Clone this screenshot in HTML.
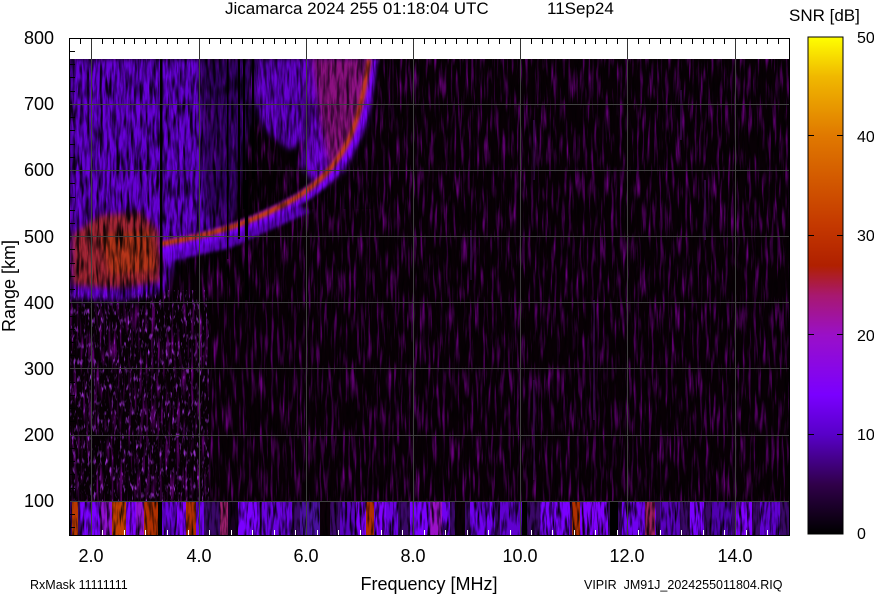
<!DOCTYPE html>
<html><head><meta charset="utf-8"><style>
html,body{margin:0;padding:0;background:#fff;}
svg{display:block;font-family:"Liberation Sans",Arial,sans-serif;}
</style></head><body>
<svg width="874" height="595" viewBox="0 0 874 595" xmlns="http://www.w3.org/2000/svg">
<defs>
<linearGradient id="cb" x1="0" y1="1" x2="0" y2="0">
<stop offset="0" stop-color="#000000"/>
<stop offset="0.1" stop-color="#30004a"/>
<stop offset="0.2" stop-color="#5800c8"/>
<stop offset="0.28" stop-color="#7a00ff"/>
<stop offset="0.4" stop-color="#9a10c8"/>
<stop offset="0.48" stop-color="#a81870"/>
<stop offset="0.54" stop-color="#b02000"/>
<stop offset="0.62" stop-color="#c43800"/>
<stop offset="0.8" stop-color="#e07800"/>
<stop offset="0.92" stop-color="#f0b800"/>
<stop offset="1" stop-color="#ffff00"/>
</linearGradient>
<filter id="nz" x="0" y="0" width="100%" height="100%">
<feTurbulence type="fractalNoise" baseFrequency="0.35 0.03" numOctaves="2" seed="3"/>
<feColorMatrix type="matrix" values="0 0 0 0 0.3  0 0 0 0 0  0 0 0 0 0.45  3 0 0 0 -1.5"/>
</filter>
<filter id="nz2" x="0" y="0" width="100%" height="100%">
<feTurbulence type="fractalNoise" baseFrequency="0.4 0.05" numOctaves="2" seed="7"/>
<feColorMatrix type="matrix" values="0 0 0 0 0  0 0 0 0 0  0 0 0 0 0  3 0 0 0 -1.3"/>
</filter>
<filter id="nz4" x="0" y="0" width="100%" height="100%">
<feTurbulence type="fractalNoise" baseFrequency="0.3 0.04" numOctaves="2" seed="19"/>
<feColorMatrix type="matrix" values="0 0 0 0 0  0 0 0 0 0  0 0 0 0 0  3.5 0 0 0 -1.6"/>
</filter>
<filter id="nz3" x="0" y="0" width="100%" height="100%">
<feTurbulence type="fractalNoise" baseFrequency="0.5 0.12" numOctaves="2" seed="11"/>
<feColorMatrix type="matrix" values="0 0 0 0 0.5  0 0 0 0 0.05  0 0 0 0 1  4 0 0 0 -2.3"/>
</filter>
<filter id="bl"><feGaussianBlur stdDeviation="3"/></filter>
<filter id="bl2"><feGaussianBlur stdDeviation="1.5"/></filter>
<clipPath id="dc"><rect x="69" y="59" width="720" height="476"/></clipPath>
</defs>

<g clip-path="url(#dc)">
<rect x="69" y="59" width="720" height="476" fill="#080005"/>
<rect x="69" y="59" width="720" height="476" filter="url(#nz)" opacity="0.7"/>
<rect x="69" y="290" width="140" height="212" filter="url(#nz3)" opacity="0.85"/>

<!-- left purple blob -->
<path d="M69 59 L200 59 L205 200 L215 240 L200 250 L175 262 L165 292 L120 300 L69 298 Z" fill="#7400f8" filter="url(#bl)" opacity="0.85"/>
<path d="M200 59 L255 59 L250 120 L232 230 L205 240 Z" fill="#5000a8" filter="url(#bl)" opacity="0.6"/>
<!-- left red blob -->
<path d="M72 235 L100 215 L140 212 L158 230 L162 250 L160 282 L120 288 L72 285 Z" fill="#b83000" filter="url(#bl)" opacity="0.75"/>
<path d="M100 235 L150 230 L158 270 L110 275 Z" fill="#c84400" filter="url(#bl)" opacity="0.5"/>
<rect x="69" y="59" width="190" height="245" filter="url(#nz4)" opacity="0.85"/>

<!-- upper F region purple -->
<path d="M255 59 L305 59 L305 140 L290 150 L265 130 L255 105 Z" fill="#7a00ff" filter="url(#bl)" opacity="0.8"/>
<path d="M300 59 L372 59 L368 120 L345 170 L320 190 L300 165 L310 120 Z" fill="#8000ff" filter="url(#bl)" opacity="0.85"/>
<path d="M312 59 L368 59 L362 110 L345 150 L330 170 L320 120 Z" fill="#b02818" filter="url(#bl)" opacity="0.45"/>
<rect x="250" y="59" width="125" height="150" filter="url(#nz4)" opacity="0.6"/>
<path d="M160 250 L230 236 L300 205 L310 212 L230 248 L165 262 Z" fill="#7000ee" filter="url(#bl2)" opacity="0.8"/>

<!-- F trace -->
<path d="M160 247 C200 240 240 230 275 212 C305 198 330 180 348 150 C360 128 366 100 372 59" fill="none" stroke="#7a00ff" stroke-width="12" filter="url(#bl2)"/>
<path d="M160 244 C200 237 240 227 275 209 C305 195 328 177 345 147 C357 125 363 98 369 59" fill="none" stroke="#c84000" stroke-width="5" filter="url(#bl2)"/>

<g fill="#000">
<rect x="160" y="59" width="2.5" height="240"/>
<rect x="227" y="59" width="1.5" height="200"/>
<rect x="238" y="59" width="2" height="180"/>
<rect x="245" y="180" width="3" height="120"/>
<rect x="252" y="59" width="2" height="120"/>
<rect x="243" y="59" width="2" height="150"/>
</g>
<g fill="#3a0a50" opacity="0.8">
<rect x="470" y="230" width="2" height="50"/>
<rect x="533" y="380" width="2" height="100"/>
<rect x="533" y="120" width="2" height="60"/>
<rect x="704" y="180" width="2" height="60"/>
<rect x="680" y="90" width="2" height="50"/>
<rect x="593" y="300" width="2" height="120"/>
</g>
<rect x="69" y="59" width="720" height="476" filter="url(#nz2)" opacity="0.5"/>

<!-- bottom band -->
<g>
<rect x="69" y="502" width="720" height="33" fill="#3a0868"/>
<rect x="72" y="502" width="6" height="33" fill="#b83800"/>
<rect x="80" y="502" width="20" height="33" fill="#7a00ff"/>
<rect x="100" y="502" width="12" height="33" fill="#9010d0"/>
<rect x="112" y="502" width="14" height="33" fill="#c04000"/>
<rect x="126" y="502" width="10" height="33" fill="#8000ff"/>
<rect x="136" y="502" width="8" height="33" fill="#9010d0"/>
<rect x="144" y="502" width="14" height="33" fill="#b03000"/>
<rect x="158" y="502" width="4" height="33" fill="#000"/>
<rect x="162" y="502" width="14" height="33" fill="#6a00e0"/>
<rect x="176" y="502" width="10" height="33" fill="#8000ff"/>
<rect x="186" y="502" width="10" height="33" fill="#b03000"/>
<rect x="196" y="502" width="8" height="33" fill="#7000f0"/>
<rect x="204" y="502" width="16" height="33" fill="#3a0868"/>
<rect x="220" y="502" width="8" height="33" fill="#a02070"/>
<rect x="228" y="502" width="10" height="33" fill="#180020"/>
<rect x="238" y="502" width="22" height="33" fill="#7a00ff"/>
<rect x="262" y="502" width="30" height="33" fill="#6a00e0"/>
<rect x="300" y="502" width="20" height="33" fill="#4a10a0"/>
<rect x="320" y="502" width="10" height="33" fill="#0c0008"/>
<rect x="340" y="502" width="15" height="33" fill="#5a00c0"/>
<rect x="356" y="502" width="30" height="33" fill="#8000ff"/>
<rect x="366" y="502" width="8" height="33" fill="#b03000"/>
<rect x="386" y="502" width="12" height="33" fill="#6a00e0"/>
<rect x="410" y="502" width="20" height="33" fill="#7a00ff"/>
<rect x="430" y="502" width="12" height="33" fill="#9a10c8"/>
<rect x="442" y="502" width="8" height="33" fill="#7000f0"/>
<rect x="455" y="502" width="10" height="33" fill="#0c0008"/>
<rect x="470" y="502" width="25" height="33" fill="#7000f0"/>
<rect x="500" y="502" width="22" height="33" fill="#6000d0"/>
<rect x="522" y="502" width="5" height="33" fill="#000"/>
<rect x="540" y="502" width="30" height="33" fill="#7a00ff"/>
<rect x="572" y="502" width="8" height="33" fill="#b03000"/>
<rect x="580" y="502" width="28" height="33" fill="#8000ff"/>
<rect x="610" y="502" width="8" height="33" fill="#000"/>
<rect x="622" y="502" width="34" height="33" fill="#7000f0"/>
<rect x="645" y="502" width="10" height="33" fill="#a02060"/>
<rect x="660" y="502" width="20" height="33" fill="#5a00c0"/>
<rect x="690" y="502" width="14" height="33" fill="#7a00ff"/>
<rect x="712" y="502" width="20" height="33" fill="#5000b0"/>
<rect x="736" y="502" width="16" height="33" fill="#8000ff"/>
<rect x="760" y="502" width="20" height="33" fill="#6000d0"/>
<rect x="69" y="502" width="720" height="33" filter="url(#nz2)" opacity="0.9"/>
</g>

<g stroke="#404040" stroke-width="1">
<line x1="91.5" y1="59" x2="91.5" y2="535"/>
<line x1="199.5" y1="59" x2="199.5" y2="535"/>
<line x1="306.5" y1="59" x2="306.5" y2="535"/>
<line x1="413.5" y1="59" x2="413.5" y2="535"/>
<line x1="520.5" y1="59" x2="520.5" y2="535"/>
<line x1="627.5" y1="59" x2="627.5" y2="535"/>
<line x1="735.5" y1="59" x2="735.5" y2="535"/>
<line x1="69" y1="104.5" x2="789" y2="104.5"/>
<line x1="69" y1="170.5" x2="789" y2="170.5"/>
<line x1="69" y1="236.5" x2="789" y2="236.5"/>
<line x1="69" y1="302.5" x2="789" y2="302.5"/>
<line x1="69" y1="368.5" x2="789" y2="368.5"/>
<line x1="69" y1="435.5" x2="789" y2="435.5"/>
<line x1="69" y1="501.5" x2="789" y2="501.5"/>
</g>
</g>

<g stroke="#333" stroke-width="1">
<line x1="91.5" y1="38" x2="91.5" y2="59"/>
<line x1="199.5" y1="38" x2="199.5" y2="59"/>
<line x1="306.5" y1="38" x2="306.5" y2="59"/>
<line x1="413.5" y1="38" x2="413.5" y2="59"/>
<line x1="520.5" y1="38" x2="520.5" y2="59"/>
<line x1="627.5" y1="38" x2="627.5" y2="59"/>
<line x1="735.5" y1="38" x2="735.5" y2="59"/>
</g>
<path stroke="#000" stroke-width="1" d="M102.5 38v6M113.5 38v6M124.5 38v6M134.5 38v6M145.5 38v6M156.5 38v6M167.5 38v6M177.5 38v6M188.5 38v6M209.5 38v6M220.5 38v6M231.5 38v6M242.5 38v6M252.5 38v6M263.5 38v6M274.5 38v6M285.5 38v6M295.5 38v6M317.5 38v6M327.5 38v6M338.5 38v6M349.5 38v6M360.5 38v6M370.5 38v6M381.5 38v6M392.5 38v6M402.5 38v6M424.5 38v6M435.5 38v6M445.5 38v6M456.5 38v6M467.5 38v6M477.5 38v6M488.5 38v6M499.5 38v6M510.5 38v6M531.5 38v6M542.5 38v6M552.5 38v6M563.5 38v6M574.5 38v6M585.5 38v6M595.5 38v6M606.5 38v6M617.5 38v6M638.5 38v6M649.5 38v6M660.5 38v6M670.5 38v6M681.5 38v6M692.5 38v6M703.5 38v6M713.5 38v6M724.5 38v6M746.5 38v6M756.5 38v6M767.5 38v6M778.5 38v6M80.5 38v6"/>
<path stroke="#000" stroke-width="1" d="M69 51.5h6M69 64.5h6M69 77.5h6M69 91.5h6M69 117.5h6M69 130.5h6M69 144.5h6M69 157.5h6M69 183.5h6M69 197.5h6M69 210.5h6M69 223.5h6M69 249.5h6M69 263.5h6M69 276.5h6M69 289.5h6M69 316.5h6M69 329.5h6M69 342.5h6M69 355.5h6M69 382.5h6M69 395.5h6M69 408.5h6M69 421.5h6M69 448.5h6M69 461.5h6M69 474.5h6M69 488.5h6M69 514.5h6M69 527.5h6"/>
<path stroke="#fff" stroke-width="1" d="M102.5 535v-5M124.5 535v-5M145.5 535v-5M167.5 535v-5M188.5 535v-5M209.5 535v-5M231.5 535v-5M252.5 535v-5M274.5 535v-5M295.5 535v-5M317.5 535v-5M338.5 535v-5M360.5 535v-5M381.5 535v-5M402.5 535v-5M424.5 535v-5M445.5 535v-5M467.5 535v-5M488.5 535v-5M510.5 535v-5M531.5 535v-5M552.5 535v-5M574.5 535v-5M595.5 535v-5M617.5 535v-5M638.5 535v-5M660.5 535v-5M681.5 535v-5M703.5 535v-5M724.5 535v-5M746.5 535v-5M767.5 535v-5"/>
<rect x="69.5" y="38.5" width="720" height="497" fill="none" stroke="#000" stroke-width="1"/>

<rect x="808" y="37" width="35" height="497" fill="url(#cb)" stroke="#000" stroke-width="1"/>
<path stroke="#000" stroke-width="1" d="M808 135.5h6M837 135.5h6M808 235.5h6M837 235.5h6M808 334.5h6M837 334.5h6M808 434.5h6M837 434.5h6"/>
<g font-size="16" fill="#000">
<text x="857" y="43">50</text>
<text x="857" y="142">40</text>
<text x="857" y="241">30</text>
<text x="857" y="341">20</text>
<text x="857" y="440">10</text>
<text x="857" y="539">0</text>
<text x="789" y="21" font-size="17">SNR [dB]</text>
</g>

<g font-size="18" fill="#000" text-anchor="end">
<text x="54" y="44">800</text>
<text x="54" y="110">700</text>
<text x="54" y="176">600</text>
<text x="54" y="243">500</text>
<text x="54" y="309">400</text>
<text x="54" y="375">300</text>
<text x="54" y="441">200</text>
<text x="54" y="507">100</text>
</g>
<g font-size="18" fill="#000" text-anchor="middle">
<text x="91" y="562">2.0</text>
<text x="199" y="562">4.0</text>
<text x="306" y="562">6.0</text>
<text x="413" y="562">8.0</text>
<text x="520" y="562">10.0</text>
<text x="627" y="562">12.0</text>
<text x="735" y="562">14.0</text>
<text x="429" y="590">Frequency [MHz]</text>
<text transform="translate(15,286) rotate(-90)">Range [km]</text>
</g>
<text x="225" y="14" font-size="17" fill="#000">Jicamarca 2024 255 01:18:04 UTC</text>
<text x="547" y="14" font-size="17" fill="#000">11Sep24</text>
<text x="30" y="589" font-size="12.5" fill="#000">RxMask 11111111</text>
<text x="584" y="589" font-size="12.5" fill="#000">VIPIR&#160;&#160;JM91J_2024255011804.RIQ</text>
</svg>
</body></html>
